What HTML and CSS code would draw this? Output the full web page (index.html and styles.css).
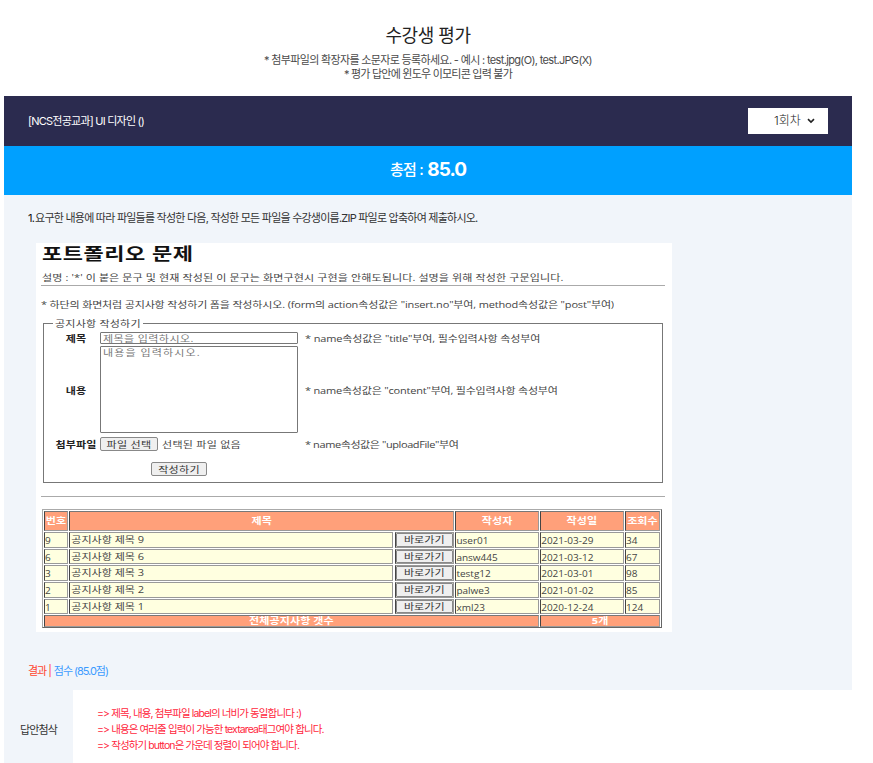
FILE: index.html
```html
<!DOCTYPE html>
<html lang="ko">
<head>
<meta charset="utf-8">
<title>수강생 평가</title>
<link rel="stylesheet" href="styles.css">
</head>
<body>
<main class="page">
  <header class="intro">
    <h1>수강생 평가</h1>
    <p class="note-a">* 첨부파일의 확장자를 소문자로 등록하세요. - 예시 : test.jpg(O), test.JPG(X)</p>
    <p class="note-b">* 평가 답안에 윈도우 이모티콘 입력 불가</p>
  </header>
  <section class="course">
    <h2>[NCS전공교과] UI 디자인 ()</h2>
    <div class="round"><span>1회차</span><svg width="8" height="6" viewBox="0 0 8 6"><path d="M1 1.2 4 4.1 7 1.2" fill="none" stroke="#222" stroke-width="1.6"/></svg></div>
  </section>
  <section class="total"><span>총점 :</span><strong>85.0</strong></section>
  <section class="question">
    <p class="ask"><b>1.</b>요구한 내용에 따라 파일들를 작성한 다음, 작성한 모든 파일을 수강생이름.ZIP 파일로 압축하여 제출하시오.</p>
    <div class="sheet">
      <div class="title"><span class="t">포트폴리오 문제</span></div>
      <div class="desc"><span class="t">설명 : '*' 이 붙은 문구 및 현재 작성된 이 문구는 화면구현시 구현을 안해도됩니다. 설명을 위해 작성한 구문입니다.</span></div>
      <div class="guide"><span class="t">* 하단의 화면처럼 공지사항 작성하기 폼을 작성하시오. (form의 action속성값은 "insert.no"부여, method속성값은 "post"부여)</span></div>
      <div class="form">
        <div class="legend"><i></i><span class="t">공지사항 작성하기</span><i class="rest"></i></div>
        <div class="fields">
          <b class="label"><span class="t">제목</span></b>
          <div class="input"><span class="t">제목을 입력하시오.</span></div>
          <div class="hint h1"><span class="t">* name속성값은 "title"부여, 필수입력사항 속성부여</span></div>
          <b class="label"><span class="t">내용</span></b>
          <div class="area"><span class="t">내용을 입력하시오.</span></div>
          <div class="hint h2"><span class="t">* name속성값은 "content"부여, 필수입력사항 속성부여</span></div>
          <b class="label"><span class="t">첨부파일</span></b>
          <div class="file"><span class="btn"><span class="t">파일 선택</span></span><span class="t">선택된 파일 없음</span></div>
          <div class="hint h3"><span class="t">* name속성값은 "uploadFile"부여</span></div>
        </div>
        <div class="submit"><span class="btn"><span class="t">작성하기</span></span></div>
      </div>
      <div class="rule"></div>
      <div class="table">
        <div class="th"><span class="t">번호</span></div><div class="th wide"><span class="t">제목</span></div><div class="th"><span class="t">작성자</span></div><div class="th"><span class="t">작성일</span></div><div class="th"><span class="t">조회수</span></div>
        <div class="td n"><span class="t">9</span></div><div class="td"><span class="t">공지사항 제목 9</span></div><div class="td go"><span class="btn"><span class="t">바로가기</span></span></div><div class="td n"><span class="t">user01</span></div><div class="td n"><span class="t">2021-03-29</span></div><div class="td n"><span class="t">34</span></div>
        <div class="td n"><span class="t">6</span></div><div class="td"><span class="t">공지사항 제목 6</span></div><div class="td go"><span class="btn"><span class="t">바로가기</span></span></div><div class="td n"><span class="t">answ445</span></div><div class="td n"><span class="t">2021-03-12</span></div><div class="td n"><span class="t">67</span></div>
        <div class="td n"><span class="t">3</span></div><div class="td"><span class="t">공지사항 제목 3</span></div><div class="td go"><span class="btn"><span class="t">바로가기</span></span></div><div class="td n"><span class="t">testg12</span></div><div class="td n"><span class="t">2021-03-01</span></div><div class="td n"><span class="t">98</span></div>
        <div class="td n"><span class="t">2</span></div><div class="td"><span class="t">공지사항 제목 2</span></div><div class="td go"><span class="btn"><span class="t">바로가기</span></span></div><div class="td n"><span class="t">palwe3</span></div><div class="td n"><span class="t">2021-01-02</span></div><div class="td n"><span class="t">85</span></div>
        <div class="td n"><span class="t">1</span></div><div class="td"><span class="t">공지사항 제목 1</span></div><div class="td go"><span class="btn"><span class="t">바로가기</span></span></div><div class="td n"><span class="t">xml23</span></div><div class="td n"><span class="t">2020-12-24</span></div><div class="td n"><span class="t">124</span></div>
        <div class="th sum"><span class="t">전체공지사항 갯수</span></div><div class="th count"><span class="t">5개</span></div>
      </div>
    </div>
    <p class="result">결과 | <span>점수 (85.0점)</span></p>
  </section>
  <section class="review">
    <div class="review-label">답안첨삭</div>
    <div class="comments">
      <p>=&gt; 제목, 내용, 첨부파일 label의 너비가 동일합니다 :)</p>
      <p>=&gt; 내용은 여러줄 입력이 가능한 textarea태그여야 합니다.</p>
      <p>=&gt; 작성하기 button은 가운데 정렬이 되어야 합니다.</p>
    </div>
  </section>
</main>
</body>
</html>
```
FILE: styles.css
```css
* { box-sizing: border-box; }
body { margin: 0; height: 763px; overflow: hidden; background: #fff; font: 400 11px/16px Inter, "Noto Sans CJK KR", sans-serif; color: #333; white-space: nowrap; }
h1, h2, p { margin: 0; font-weight: 400; }
.page { width: 848px; margin-left: 4px; }

.intro { height: 96px; padding-top: 23px; text-align: center; font-weight: 300; color: #4a4a4a; line-height: 14px; }
.intro h1 { font-size: 18px; line-height: 26px; letter-spacing: -0.48px; color: #222; margin-bottom: 4px; }
.note-a { letter-spacing: -0.66px; }
.note-b { letter-spacing: -0.78px; }

.course { height: 50px; padding: 0 24px; background: #2b2b4f; display: flex; align-items: center; justify-content: space-between; }
.course h2 { font-size: 11px; letter-spacing: -0.77px; color: #fff; padding-bottom: 1px; }
.round { width: 80px; height: 26px; padding-left: 26px; background: #fff; display: flex; align-items: center; gap: 6px; font-size: 12px; font-weight: 300; color: #222; }

.total { height: 49px; padding-bottom: 1px; background: #00a0ff; color: #fff; display: flex; align-items: center; justify-content: center; gap: 4px; font-size: 15px; font-weight: 500; letter-spacing: -0.7px; }
.total strong { font-size: 19px; font-weight: 700; letter-spacing: -0.95px; }

.question { height: 495px; padding: 15px 24px 0; background: #f1f5fa; }
.ask { letter-spacing: -0.77px; margin-bottom: 17px; }
.ask b { font-weight: 400; color: #111; margin-right: 1px; }
.result { margin-top: 31px; letter-spacing: -1.05px; color: #ff4530; }
.result span { color: #3c9bff; margin-left: 1px; }

.sheet { width: 636px; height: 389px; margin-left: 8px; padding: 0 7px 0 5px; background: #fff; color: #444; font: 400 11px/14px "Open Sans", "Noto Sans CJK KR", sans-serif; }
.t { display: inline-block; transform: scaleY(0.8); }
.title { height: 28px; padding: 0 1px; font-size: 22px; line-height: 20px; font-weight: 700; letter-spacing: 0.5px; color: #111; }
.title .t { transform: scaleY(0.75); }
.desc { height: 15px; padding-left: 1px; border-bottom: 1px solid #aaa; letter-spacing: 0.12px; }
.guide { height: 38px; padding-top: 12px; letter-spacing: -0.16px; }
.form { display: flow-root; width: 620px; height: 160px; margin-left: 2px; margin-top: -1px; border: 1px solid #777; border-top: 0; }
.form .t { transform: translateY(0.6px) scaleY(0.8); }
.legend { height: 14px; margin-top: -7px; display: flex; align-items: center; gap: 2px; letter-spacing: 0.22px; }
.legend i { width: 9px; height: 1px; background: #777; }
.legend .rest { flex: 1; }
.fields { display: grid; grid-template-columns: 56px 198px 1fr; grid-template-rows: 12px 87px 17px; row-gap: 2px; align-items: center; margin-top: 2px; }
.label { text-align: center; padding-left: 8px; letter-spacing: 0.1px; color: #222; }
.input, .area { border: 1px solid #777; border-radius: 1px; color: #777; padding-left: 2px; }
.input { height: 12px; line-height: 10px; letter-spacing: 0.4px; }
.area { height: 87px; line-height: 10px; letter-spacing: 1.1px; }
.hint { padding-left: 7px; }
.h1 { letter-spacing: -0.14px; }
.h2 { letter-spacing: -0.2px; }
.h3 { letter-spacing: -0.41px; }
.btn { display: flex; align-items: center; justify-content: center; background: #efefef; border: 1px solid #888; border-radius: 2px; letter-spacing: 0.3px; line-height: 12px; color: #333; }
.file { display: flex; align-items: center; gap: 4px; letter-spacing: 0.27px; }
.file .btn { width: 58px; height: 14px; }
.submit { padding: 10px 0 0 107px; }
.submit .btn { width: 56px; height: 14px; }
.rule { height: 1px; background: #aaa; margin-top: 13px; margin-bottom: 12px; }

.table { width: 620px; height: 119px; margin-left: 1px; padding: 1px; border: 1px solid #aaa; border-right-color: #666; border-bottom-color: #666; display: grid; grid-template-columns: 24px 324px 59.5px 83.5px 83.5px 35px; grid-template-rows: 20px repeat(5, 15.7px) 12px; gap: 1px 1.3px; }
.th, .td { border: 1px solid #999; border-left-color: #444; display: flex; align-items: center; line-height: 12px; overflow: hidden; min-width: 0; }
.th { background: #ffa07a; color: #fff; font-weight: 700; justify-content: center; border-top-color: #777; letter-spacing: 0.1px; }
.td { background: #ffffe0; padding-left: 1px; }
.n { font-size: 10px; padding-left: 0; }
.n .t { transform: scaleY(0.9); }
.wide { grid-column: span 2; }
.sum { grid-column: span 4; }
.count { grid-column: span 2; }
.go { padding: 0; }
.go .btn { width: 100%; height: 100%; letter-spacing: 0.1px; border-radius: 1px; }

.review { display: flex; height: 90px; }
.review-label { width: 69px; height: 90px; padding-left: 16px; background: #f1f5fa; line-height: 81px; letter-spacing: -0.87px; }
.comments { flex: 1; background: #fff; padding: 16px 0 0 24px; color: #ff1f3d; font-size: 10.5px; letter-spacing: -0.89px; }
```
